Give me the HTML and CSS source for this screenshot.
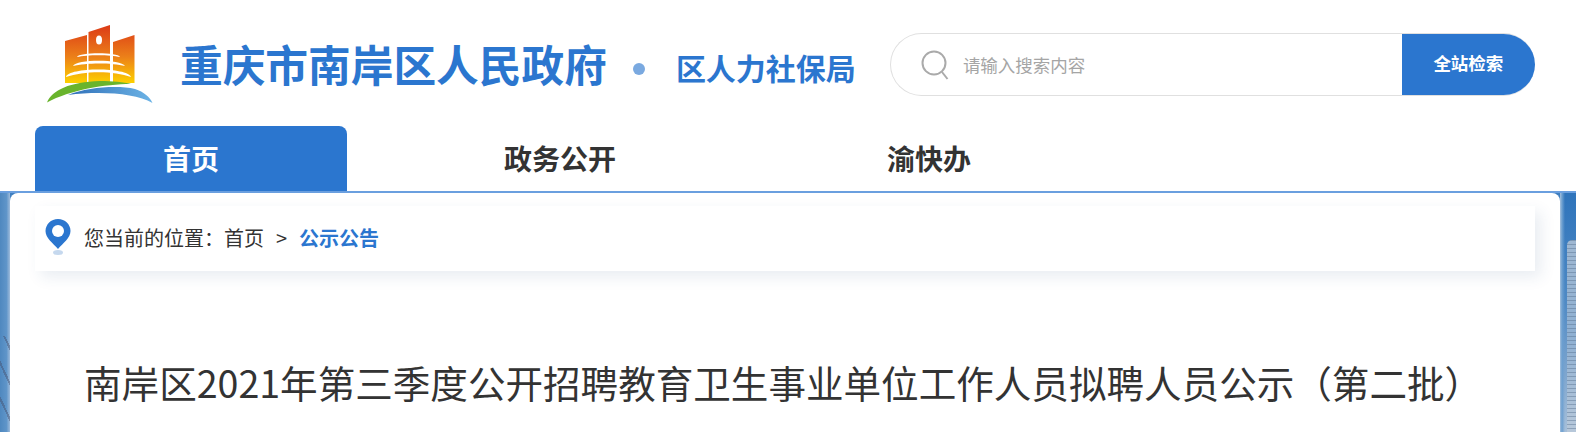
FILE: index.html
```html
<!DOCTYPE html>
<html lang="zh-CN">
<head>
  <meta charset="UTF-8" />
  <title>南岸区2021年第三季度公开招聘教育卫生事业单位工作人员拟聘人员公示（第二批）</title>
  <link rel="stylesheet" href="styles.css">
</head>
<body>
  <div class="header">
    <svg class="logo" viewBox="45 22 110 84" width="110" height="84">
      <defs>
        <linearGradient id="sky" gradientUnits="userSpaceOnUse" x1="0" y1="25" x2="0" y2="83">
          <stop offset="0" stop-color="#dc3a17"/>
          <stop offset="0.55" stop-color="#ec8019"/>
          <stop offset="1" stop-color="#fdd000"/>
        </linearGradient>
        <linearGradient id="river" x1="0" y1="0" x2="1" y2="0">
          <stop offset="0" stop-color="#2f6fb8"/>
          <stop offset="1" stop-color="#6db4e6"/>
        </linearGradient>
      </defs>
      <path fill="url(#sky)" d="M65 41L87 35V83H65ZM88.500 32L110 25V83H88.500ZM113 42L134.500 35V83H113Z"/>
      <ellipse cx="99" cy="40" rx="3" ry="4.500" fill="#fff"/>
      <path fill="#fff" d="M77 57C79 52 118 52 120 57C110 54.500 87 54.500 77 57ZM73 66C76 59 121 59 125 66C112 62.500 86 62.500 73 66ZM66 77C68 67 128 67 131 77C114 70.500 84 70.500 66 77Z"/>
      <path fill="#69b42c" d="M47 102.500C52 90 70 82 100 81C112 81 124 82 131 84C105 84 70 90 47 102.500Z"/>
      <path fill="url(#river)" d="M68 95C88 87 118 85 135 89C144 92 150 97 152.500 103C135 93 100 91 68 95Z"/>
    </svg>
    <div class="site-name">重庆市南岸区人民政府</div>
    <span class="dot"></span>
    <div class="dept-name">区人力社保局</div>
    <div class="search">
      <svg class="search-icon" viewBox="0 0 28 30" width="28" height="30">
        <circle cx="13" cy="13" r="11.500" fill="none" stroke="#aaa" stroke-width="2"/>
        <path d="M21 22L26.500 29" fill="none" stroke="#aaa" stroke-width="2"/>
      </svg>
      <div class="search-text">请输入搜索内容</div>
      <div class="search-btn">全站检索</div>
    </div>
  </div>

  <div class="nav">
    <a class="nav-item active" href="#">首页</a>
    <a class="nav-item" href="#">政务公开</a>
    <a class="nav-item" href="#">渝快办</a>
  </div>

  <div class="band">
    <div class="side-left"><div class="hatch"></div></div>
    <div class="card">
      <div class="crumbs">
        <svg class="pin" viewBox="0 0 26 38" width="26" height="38">
          <ellipse cx="13" cy="34.500" rx="5" ry="2.500" fill="#c5d8ee"/>
          <path fill="#2b76cf" d="M13 1C6 1 .500 6.500.500 13C.500 20 8 25 13 31C18 25 25.500 20 25.500 13C25.500 6.500 20 1 13 1Z"/>
          <circle cx="13" cy="13" r="6" fill="#fff"/>
        </svg>
        <span>您当前的位置：</span>
        <a class="crumb-link" href="#">首页</a>
        <span class="crumb-sep">&gt;</span>
        <a class="crumb-now" href="#">公示公告</a>
      </div>
      <h1 class="title">南岸区2021年第三季度公开招聘教育卫生事业单位工作人员拟聘人员公示（第二批）</h1>
    </div>
    <div class="side-right"><div class="tower"></div></div>
  </div>
</body>
</html>
```

FILE: styles.css
```css
body {
  margin: 0;
  height: 432px;
  overflow: hidden;
  background-color: #ffffff;
  color: #333333;
  font-family: 'Noto Sans CJK SC', 'Liberation Sans', sans-serif;
  display: flex;
  flex-direction: column;
}

a {
  text-decoration: none;
}

.header {
  height: 126px;
  flex-shrink: 0;
  display: flex;
  align-items: flex-start;
  padding-left: 45px;
}

.logo {
  margin-top: 22px;
  flex-shrink: 0;
}

.site-name {
  margin: 33px 0 0 25px;
  font-size: 42.700px;
  line-height: 60px;
  font-weight: 700;
  color: #2b76cf;
  white-space: nowrap;
}

.dot {
  width: 12px;
  height: 12px;
  margin: 63px 0 0 26px;
  border-radius: 50%;
  background-color: #7aa9e0;
}

.dept-name {
  margin: 46px 0 0 31px;
  font-size: 30px;
  line-height: 42px;
  font-weight: 700;
  color: #2b76cf;
  white-space: nowrap;
}

.search {
  width: 645px;
  height: 63px;
  margin: 33px 0 0 34px;
  display: flex;
  align-items: center;
  border: 1px solid #e0e0e0;
  border-right: none;
  border-radius: 32px;
  box-sizing: border-box;
  padding-left: 30px;
  overflow: hidden;
}

.search-icon {
  flex-shrink: 0;
}

.search-text {
  flex-grow: 1;
  margin-left: 14px;
  font-size: 17.500px;
  line-height: 58px;
  color: #a5a5a5;
}

.search-btn {
  width: 133px;
  height: 63px;
  line-height: 60px;
  text-align: center;
  background-color: #2b76cf;
  color: #ffffff;
  font-size: 17.500px;
  font-weight: 700;
  flex-shrink: 0;
}

.nav {
  height: 65px;
  flex-shrink: 0;
  display: flex;
  gap: 57px;
  padding-left: 35px;
}

.nav-item {
  width: 312px;
  height: 65px;
  line-height: 65px;
  text-align: center;
  font-size: 28px;
  font-weight: 700;
  color: #333333;
  border-radius: 8px 8px 0 0;
}

.nav-item.active {
  background-color: #2b76cf;
  color: #ffffff;
}

.band {
  flex-grow: 1;
  display: flex;
  border-top: 2px solid #6a9fdf;
  background-color: #3f7fc0;
}

.side-left {
  width: 10px;
  flex-shrink: 0;
  background-image: linear-gradient(90deg, #4f88bf 0%, #5f95c9 65%, #9fbcdb 100%);
}

.hatch {
  height: 100px;
  margin-top: 143px;
  background-image: repeating-linear-gradient(65deg, rgba(70, 80, 110, 0.45) 0 2px, transparent 2px 15px);
}

.card {
  flex-grow: 1;
  background-color: #ffffff;
  border-radius: 8px 8px 0 0;
  padding: 13px 25px 0;
}

.side-right {
  width: 16px;
  flex-shrink: 0;
  background-image:
    linear-gradient(90deg, #a5c0dc 0, #6c9fd0 2px, transparent 5px),
    linear-gradient(180deg, #2f74bb 0%, #4f8ac5 45%, #7ea6cf 75%, #a9c1da 100%);
}

.tower {
  height: 192px;
  margin: 47px 0 0 7px;
  border-radius: 5px 0 0 0;
  background-image:
    repeating-linear-gradient(180deg, rgba(80, 105, 135, 0.4) 0 1px, transparent 1px 4px),
    linear-gradient(180deg, #9fb8d2 0%, #8fb0d2 50%, #b7c8da 100%);
}

.crumbs {
  height: 65px;
  box-sizing: border-box;
  padding: 0 0 2px 10px;
  display: flex;
  align-items: center;
  font-size: 20px;
  color: #333333;
  background-color: #ffffff;
  box-shadow: 6px 6px 14px rgba(40, 80, 130, 0.1);
}

.pin {
  margin: 0 13px 2px 0;
  flex-shrink: 0;
}

.crumb-link {
  color: #333333;
}

.crumb-sep {
  margin: 0 12px;
}

.crumb-now {
  color: #2b76cf;
  font-weight: 700;
}

.title {
  margin: 83px 0 0 49px;
  font-size: 37.570px;
  line-height: 56px;
  font-weight: 400;
  color: #333333;
  white-space: nowrap;
}
```
